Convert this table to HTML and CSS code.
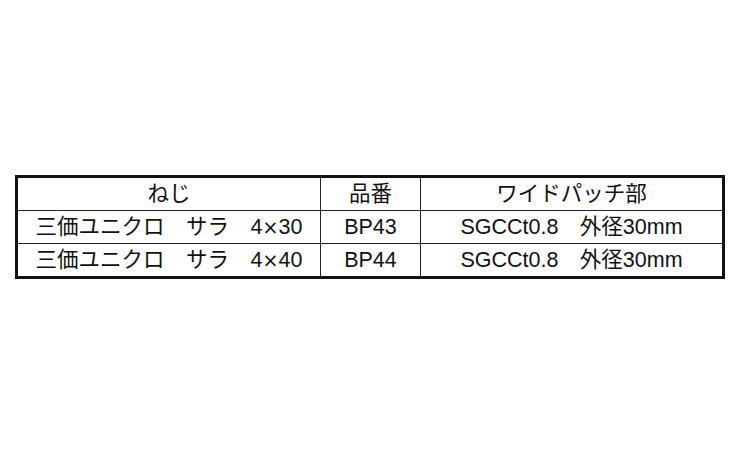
FILE: index.html
```html
<!DOCTYPE html>
<html lang="ja">
<head>
<meta charset="utf-8">
<link rel="stylesheet" href="styles.css">
</head>
<body>
<table class="spec">
  <colgroup>
    <col class="c1"><col class="c2"><col class="c3">
  </colgroup>
  <tr class="head">
    <td>ねじ</td>
    <td>品番</td>
    <td class="last">ワイドパッチ部</td>
  </tr>
  <tr>
    <td>三価ユニクロ　サラ　4<span class="times">×</span>30</td>
    <td>BP43</td>
    <td class="last">SGCCt0.8　外径30mm</td>
  </tr>
  <tr class="end">
    <td>三価ユニクロ　サラ　4<span class="times">×</span>40</td>
    <td>BP44</td>
    <td class="last">SGCCt0.8　外径30mm</td>
  </tr>
</table>
</body>
</html>
```

FILE: styles.css
```css
html, body {
  margin: 0;
  padding: 0;
  background: #fff;
}
body {
  font-family: "Liberation Sans", Arial, "Noto Sans CJK JP", sans-serif;
  color: #111;
}
.spec {
  margin: 175px 0 0 15px;
  width: 710px;
  box-sizing: border-box;
  border: 3px solid #111;
  border-collapse: separate;
  border-spacing: 0;
  table-layout: fixed;
}
.c1 { width: 303px; }
.c2 { width: 100px; }
.c3 { width: 301px; }
.spec td {
  box-sizing: border-box;
  height: 33px;
  padding: 0;
  text-align: center;
  vertical-align: middle;
  font-size: 21.5px;
  line-height: 24px;
  border-right: 1px solid #222;
  border-bottom: 1px solid #222;
  white-space: nowrap;
}
.spec td.last { border-right: none; }
.spec tr.end td { border-bottom: none; height: 32px; }
.times {
  font-family: "DejaVu Sans", sans-serif;
  font-size: 19px;
}
```
